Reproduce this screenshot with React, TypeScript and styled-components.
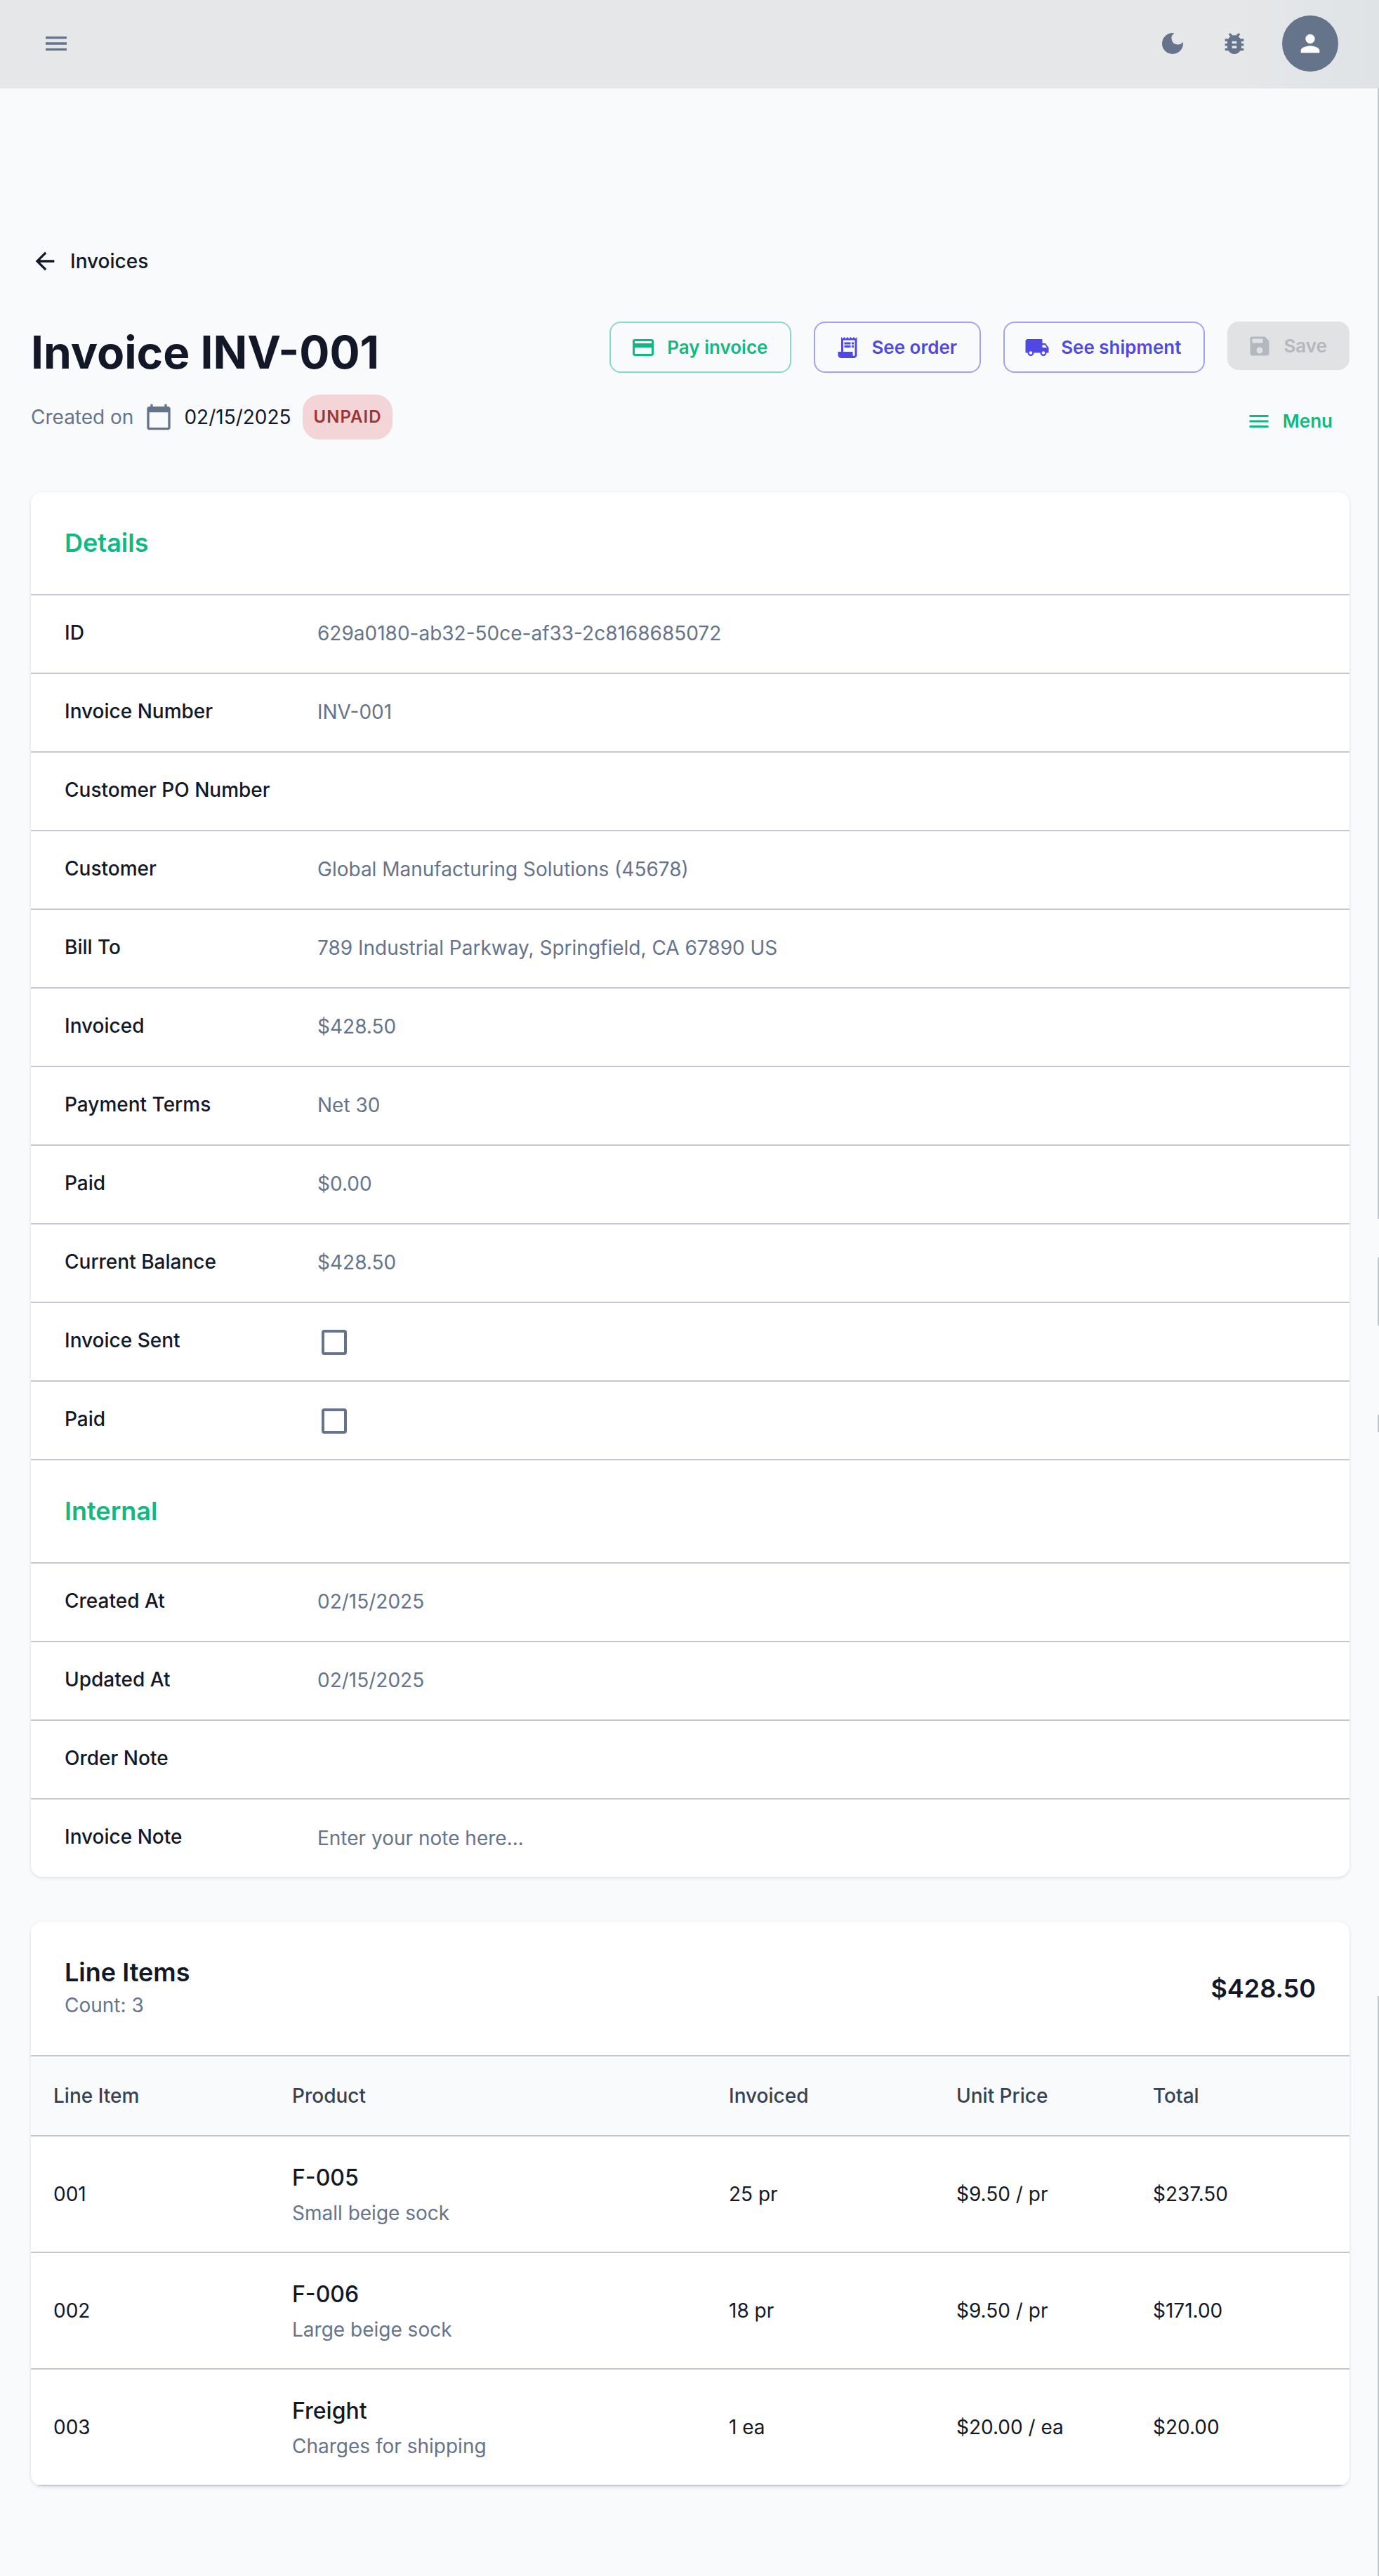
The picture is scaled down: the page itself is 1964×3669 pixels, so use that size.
import React, { useState } from "react";
import styled, { createGlobalStyle } from "styled-components";
import {
  MdArrowBack,
  MdBugReport,
  MdCalendarToday,
  MdCreditCard,
  MdDarkMode,
  MdLocalShipping,
  MdMenu,
  MdPerson,
  MdReceiptLong,
  MdSave,
} from "react-icons/md";

const color = {
  page: "#f9fafc",
  paper: "#ffffff",
  bar: "#e5e7e9",
  barEnd: "#dfe3e6",
  text: "#121828",
  heading: "#374151",
  muted: "#65748b",
  divider: "#c4c7ce",
  green: "#10b981",
  indigo: "#5048e5",
};

const GlobalStyle = createGlobalStyle`
  *, *::before, *::after { box-sizing: border-box; }
  body {
    margin: 0;
    background: ${color.page};
    color: ${color.text};
    font-family: Inter, "Liberation Sans", sans-serif;
    font-size: 28px;
    line-height: 44px;
  }
  h1, h2, p, dl, dd { margin: 0; }
  button, input { font: inherit; }
`;

const Page = styled.div`
  position: relative;
  min-height: 100vh;
`;

/* Broken hairline along the right edge of the window. */
const EdgeLine = styled.div`
  position: absolute;
  top: 126px;
  right: 0;
  bottom: 0;
  width: 2px;
  background: linear-gradient(
    ${color.divider} 1610px,
    transparent 1610px 1665px,
    ${color.divider} 1665px 1762px,
    transparent 1762px 1889px,
    ${color.divider} 1889px 1914px,
    transparent 1914px 2717px,
    ${color.divider} 2717px
  );
`;

const TopBar = styled.header`
  display: flex;
  align-items: center;
  justify-content: space-between;
  height: 126px;
  padding: 0 58px 2px 52px;
  background: linear-gradient(to right, ${color.bar} 90%, ${color.barEnd});
`;

const TopActions = styled.div`
  display: flex;
  align-items: center;
  gap: 32px;
`;

const IconButton = styled.button`
  display: flex;
  padding: 8px;
  border: 0;
  background: none;
  color: ${color.muted};
  font-size: 40px;
  cursor: pointer;
`;

const Avatar = styled.button`
  display: grid;
  place-items: center;
  width: 80px;
  height: 80px;
  margin-left: 8px;
  padding: 0;
  border: 0;
  border-radius: 50%;
  background: ${color.muted};
  color: ${color.paper};
  font-size: 40px;
  cursor: pointer;
`;

const Content = styled.main`
  padding: 224px 42px 128px 44px;
`;

const BackLink = styled.a`
  display: inline-flex;
  align-items: center;
  gap: 16px;
  margin-bottom: 64px;
  color: ${color.text};
  font-weight: 500;
  text-decoration: none;
  vertical-align: top;

  svg { font-size: 40px; }
`;

const TitleRow = styled.div`
  display: flex;
  align-items: flex-start;
  justify-content: space-between;
  gap: 32px;
  margin-bottom: 67px;
`;

const Title = styled.h1`
  margin-bottom: 16px;
  font-size: 64px;
  font-weight: 700;
  line-height: 88px;
`;

const Meta = styled.div`
  display: flex;
  align-items: center;
  gap: 16px;

  svg { color: ${color.muted}; font-size: 40px; }
`;

const Muted = styled.span`
  color: ${color.muted};
`;

const Badge = styled.span`
  padding: 0 16px;
  border-radius: 24px;
  background: #f3d5d7;
  color: #9b3638;
  font-size: 24px;
  font-weight: 600;
  line-height: 64px;
  letter-spacing: 1px;
`;

const ActionArea = styled.div`
  display: flex;
  flex-direction: column;
  align-items: flex-end;
  gap: 34px;
`;

const Actions = styled.div`
  display: flex;
  flex-wrap: wrap;
  align-items: flex-start;
  justify-content: flex-end;
  gap: 32px;
`;

const Button = styled.button<{ $tone?: string; $line?: string }>`
  display: inline-flex;
  align-items: center;
  gap: 16px;
  padding: 12px 32px 12px 28px;
  border: ${(p) => (p.$line ? `2px solid ${p.$line}` : "0")};
  border-radius: 16px;
  background: none;
  color: ${(p) => p.$tone};
  font-size: 26px;
  font-weight: 600;
  line-height: 45px;
  white-space: nowrap;
  cursor: pointer;

  svg { font-size: 36px; }

  &:disabled {
    background: #e0e2e4;
    color: #b3b7be;
    cursor: default;
  }
`;

const MenuButton = styled(Button)`
  padding-right: 24px;
`;

const Card = styled.section`
  overflow: hidden;
  border-radius: 16px;
  background: ${color.paper};
  box-shadow: 0 2px 4px rgba(100, 116, 139, 0.16), 0 0 4px rgba(100, 116, 139, 0.06);

  & + & { margin-top: 64px; }
`;

const SectionTitle = styled.h2`
  padding: 48px 48px 49px;
  border-bottom: 2px solid ${color.divider};
  color: ${color.green};
  font-size: 36px;
  font-weight: 600;
  line-height: 48px;
`;

const Rows = styled.dl<{ $last?: boolean }>`
  & > div:last-child {
    border-bottom-width: ${(p) => (p.$last ? "0" : "2px")};
  }
`;

const Row = styled.div`
  display: grid;
  grid-template-columns: 360px 1fr;
  align-items: start;
  min-height: 110px;
  padding: 32px 48px;
  border-bottom: 2px solid ${color.divider};
`;

const Term = styled.dt`
  font-weight: 500;
  line-height: 42px;
`;

const Value = styled.dd`
  min-height: 46px;
  color: ${color.muted};
`;

const CheckBox = styled.input`
  display: block;
  appearance: none;
  width: 36px;
  height: 36px;
  margin: 6px 6px 4px;
  border: 4px solid ${color.muted};
  border-radius: 4px;
  cursor: pointer;

  &:checked { background: ${color.muted}; }
`;

const NoteInput = styled.input`
  display: block;
  width: 100%;
  height: 46px;
  padding: 0;
  border: 0;
  outline: 0;
  background: none;
  color: ${color.text};

  &::placeholder { color: ${color.muted}; opacity: 1; }
`;

const CardHeader = styled.div`
  display: flex;
  align-items: center;
  justify-content: space-between;
  padding: 48px;
  border-bottom: 2px solid ${color.divider};
`;

const CardTitle = styled.h2`
  font-size: 36px;
  font-weight: 600;
  line-height: 48px;
`;

const Count = styled.p`
  color: ${color.muted};
  line-height: 46px;
`;

const Amount = styled.p`
  font-size: 36px;
  font-weight: 600;
`;

const Table = styled.table`
  width: 100%;
  table-layout: fixed;
  border-collapse: separate;
  border-spacing: 0;
  text-align: left;

  th, td {
    padding: 32px;
    border-bottom: 2px solid ${color.divider};
  }
  td { line-height: 42px; }
  th {
    padding: 34px 32px;
    background: ${color.page};
    color: ${color.heading};
    font-weight: 500;
  }
`;

const Col = styled.col<{ $width?: number }>`
  width: ${(p) => (p.$width ? `${p.$width}px` : "auto")};
`;

const ProductName = styled.p`
  font-size: 32px;
  font-weight: 500;
  line-height: 54px;
`;

const details = [
  ["ID", "629a0180-ab32-50ce-af33-2c8168685072"],
  ["Invoice Number", "INV-001"],
  ["Customer PO Number", ""],
  ["Customer", "Global Manufacturing Solutions (45678)"],
  ["Bill To", "789 Industrial Parkway, Springfield, CA 67890 US"],
  ["Invoiced", "$428.50"],
  ["Payment Terms", "Net 30"],
  ["Paid", "$0.00"],
  ["Current Balance", "$428.50"],
];

const internal = [
  ["Created At", "02/15/2025"],
  ["Updated At", "02/15/2025"],
  ["Order Note", ""],
];

const lineItems = [
  { no: "001", name: "F-005", about: "Small beige sock", qty: "25 pr", price: "$9.50 / pr", total: "$237.50" },
  { no: "002", name: "F-006", about: "Large beige sock", qty: "18 pr", price: "$9.50 / pr", total: "$171.00" },
  { no: "003", name: "Freight", about: "Charges for shipping", qty: "1 ea", price: "$20.00 / ea", total: "$20.00" },
];

function TextRow({ label, value }: { label: string; value: string }) {
  return (
    <Row>
      <Term>{label}</Term>
      <Value>{value}</Value>
    </Row>
  );
}

function CheckRow({ id, label }: { id: string; label: string }) {
  const [checked, setChecked] = useState(false);
  return (
    <Row>
      <Term>
        <label htmlFor={id}>{label}</label>
      </Term>
      <Value>
        <CheckBox id={id} type="checkbox" checked={checked} onChange={(e) => setChecked(e.target.checked)} />
      </Value>
    </Row>
  );
}

export default function App() {
  const [note, setNote] = useState("");
  return (
    <Page>
      <GlobalStyle />
      <TopBar>
        <IconButton type="button" aria-label="Open navigation">
          <MdMenu />
        </IconButton>
        <TopActions>
          <IconButton type="button" aria-label="Dark mode">
            <MdDarkMode />
          </IconButton>
          <IconButton type="button" aria-label="Report a bug">
            <MdBugReport />
          </IconButton>
          <Avatar type="button" aria-label="Account">
            <MdPerson />
          </Avatar>
        </TopActions>
      </TopBar>

      <Content>
        <BackLink href="#invoices">
          <MdArrowBack />
          Invoices
        </BackLink>

        <TitleRow>
          <div>
            <Title>Invoice INV-001</Title>
            <Meta>
              <Muted>Created on</Muted>
              <MdCalendarToday />
              <span>02/15/2025</span>
              <Badge>UNPAID</Badge>
            </Meta>
          </div>
          <ActionArea>
            <Actions>
              <Button type="button" $tone={color.green} $line="#87dcc0">
                <MdCreditCard />
                Pay invoice
              </Button>
              <Button type="button" $tone={color.indigo} $line="#a5a1f1">
                <MdReceiptLong />
                See order
              </Button>
              <Button type="button" $tone={color.indigo} $line="#a5a1f1">
                <MdLocalShipping />
                See shipment
              </Button>
              <Button type="button" disabled>
                <MdSave />
                Save
              </Button>
            </Actions>
            <MenuButton type="button" $tone={color.green}>
              <MdMenu />
              Menu
            </MenuButton>
          </ActionArea>
        </TitleRow>

        <Card>
          <SectionTitle>Details</SectionTitle>
          <Rows>
            {details.map(([label, value]) => (
              <TextRow key={label} label={label} value={value} />
            ))}
            <CheckRow id="invoice-sent" label="Invoice Sent" />
            <CheckRow id="invoice-paid" label="Paid" />
          </Rows>
          <SectionTitle>Internal</SectionTitle>
          <Rows $last>
            {internal.map(([label, value]) => (
              <TextRow key={label} label={label} value={value} />
            ))}
            <Row>
              <Term>
                <label htmlFor="invoice-note">Invoice Note</label>
              </Term>
              <Value>
                <NoteInput
                  id="invoice-note"
                  type="text"
                  placeholder="Enter your note here..."
                  value={note}
                  onChange={(e) => setNote(e.target.value)}
                />
              </Value>
            </Row>
          </Rows>
        </Card>

        <Card>
          <CardHeader>
            <div>
              <CardTitle>Line Items</CardTitle>
              <Count>Count: 3</Count>
            </div>
            <Amount>$428.50</Amount>
          </CardHeader>
          <Table>
            <colgroup>
              <Col $width={340} />
              <Col />
              <Col $width={324} />
              <Col $width={280} />
              <Col $width={312} />
            </colgroup>
            <thead>
              <tr>
                <th scope="col">Line Item</th>
                <th scope="col">Product</th>
                <th scope="col">Invoiced</th>
                <th scope="col">Unit Price</th>
                <th scope="col">Total</th>
              </tr>
            </thead>
            <tbody>
              {lineItems.map((item) => (
                <tr key={item.no}>
                  <td>{item.no}</td>
                  <td>
                    <ProductName>{item.name}</ProductName>
                    <Count>{item.about}</Count>
                  </td>
                  <td>{item.qty}</td>
                  <td>{item.price}</td>
                  <td>{item.total}</td>
                </tr>
              ))}
            </tbody>
          </Table>
        </Card>
      </Content>
      <EdgeLine />
    </Page>
  );
}
